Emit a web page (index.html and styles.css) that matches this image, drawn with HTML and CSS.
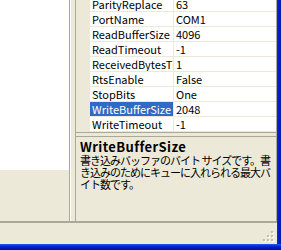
FILE: index.html
```html
<!DOCTYPE html>
<html lang="ja">
<head>
    <meta charset="UTF-8">
    <title>SerialPort Properties</title>
    <link rel="stylesheet" href="styles.css">
</head>
<body>
    <div class="window">
        <div class="frame">
            <div class="client">
                <div class="panes">
                    <div class="left-pane">
                        <div class="list"></div>
                    </div>
                    <div class="splitter"></div>
                    <div class="props">
                        <div class="grid">
                            <div class="rows">
                                <div class="row"><span class="name">ParityReplace</span><span class="value">63</span></div>
                                <div class="row"><span class="name">PortName</span><span class="value">COM1</span></div>
                                <div class="row"><span class="name">ReadBufferSize</span><span class="value">4096</span></div>
                                <div class="row"><span class="name">ReadTimeout</span><span class="value">-1</span></div>
                                <div class="row"><span class="name">ReceivedBytesThreshold</span><span class="value">1</span></div>
                                <div class="row"><span class="name">RtsEnable</span><span class="value">False</span></div>
                                <div class="row"><span class="name">StopBits</span><span class="value">One</span></div>
                                <div class="row selected"><span class="name">WriteBufferSize</span><span class="value">2048</span></div>
                                <div class="row"><span class="name">WriteTimeout</span><span class="value">-1</span></div>
                            </div>
                        </div>
                        <div class="help">
                            <div class="help-title">WriteBufferSize</div>
                            <div class="help-text">書き込みバッファのバイト サイズです。書<br>き込みのためにキューに入れられる最大バ<br>イト数です。</div>
                        </div>
                    </div>
                </div>
                <div class="status">
                    <!-- size grip -->
                    <svg class="grip" width="12" height="12" viewBox="0 0 12 12">
                        <rect x="9" y="1" width="2" height="2" fill="#fff"/>
                        <rect x="8" y="0" width="2" height="2" fill="#c3bfae"/>
                        <rect x="5" y="5" width="2" height="2" fill="#fff"/>
                        <rect x="4" y="4" width="2" height="2" fill="#c3bfae"/>
                        <rect x="9" y="5" width="2" height="2" fill="#fff"/>
                        <rect x="8" y="4" width="2" height="2" fill="#c3bfae"/>
                        <rect x="1" y="9" width="2" height="2" fill="#fff"/>
                        <rect x="0" y="8" width="2" height="2" fill="#c3bfae"/>
                        <rect x="5" y="9" width="2" height="2" fill="#fff"/>
                        <rect x="4" y="8" width="2" height="2" fill="#c3bfae"/>
                        <rect x="9" y="9" width="2" height="2" fill="#fff"/>
                        <rect x="8" y="8" width="2" height="2" fill="#c3bfae"/>
                    </svg>
                </div>
            </div>
            <div class="border-right"></div>
        </div>
        <div class="border-bottom"></div>
    </div>
</body>
</html>
```

FILE: styles.css
```css
* {
    box-sizing: border-box;
    margin: 0;
    padding: 0;
}

body {
    font-family: "Noto Sans CJK JP", "Noto Sans", sans-serif;
    font-size: 12px;
    background: #ece9d8;
    overflow: hidden;
}

.window {
    width: 281px;
    height: 250px;
    display: flex;
    flex-direction: column;
}

.frame {
    display: flex;
    height: 244px;
}

.client {
    width: 277px;
    display: flex;
    flex-direction: column;
    background: #ece9d8;
}

.border-right {
    width: 4px;
    background: linear-gradient(90deg, #0831d9 0%, #0019cf 50%, #001ea0 100%);
}

.border-bottom {
    height: 6px;
    background: linear-gradient(180deg, #1d5ef0 0%, #0831d9 30%, #0019cf 60%, #00138c 100%);
}

.panes {
    display: flex;
    height: 223px;
    border-bottom: 2px solid #aca899;
}

.left-pane {
    width: 69px;
}

.list {
    height: 170px;
    background: #fff;
}

.splitter {
    width: 7px;
    border-left: 1px solid #aca899;
    border-right: 1px solid #aca899;
    box-shadow: inset 1px 0 #fff;
}

.props {
    flex: 1;
    display: flex;
    flex-direction: column;
    border-right: 1px solid #aca899;
}

.grid {
    height: 133px;
    border-bottom: 1px solid #aca899;
    padding-left: 14px;
    overflow: hidden;
}

.rows {
    margin-top: -3px;
    background: #fff;
}

.row {
    display: flex;
    height: 15px;
    line-height: 14px;
    font-size: 11px;
    border-bottom: 1px solid #ece9d8;
    color: #000;
}

.name {
    width: 84px;
    padding-left: 2px;
    border-right: 1px solid #ece9d8;
    white-space: nowrap;
    overflow: hidden;
}

.value {
    flex: 1;
    padding-left: 2px;
}

.row.selected .name {
    background: #316ac5;
    color: #fff;
}

.help {
    flex: 1;
    margin-top: 3px;
    border-top: 1px solid #aca899;
    padding: 3px 4px 0 4px;
    color: #000;
}

.help-title {
    font-weight: bold;
    font-size: 13px;
    letter-spacing: 0.4px;
    line-height: 13px;
    margin-bottom: 1px;
}

.help-text {
    font-size: 11px;
    letter-spacing: -1px;
    line-height: 12px;
    white-space: nowrap;
}

.status {
    flex: 1;
    display: flex;
    justify-content: flex-end;
    align-items: flex-end;
    padding: 0 2px 1px 0;
}
```
